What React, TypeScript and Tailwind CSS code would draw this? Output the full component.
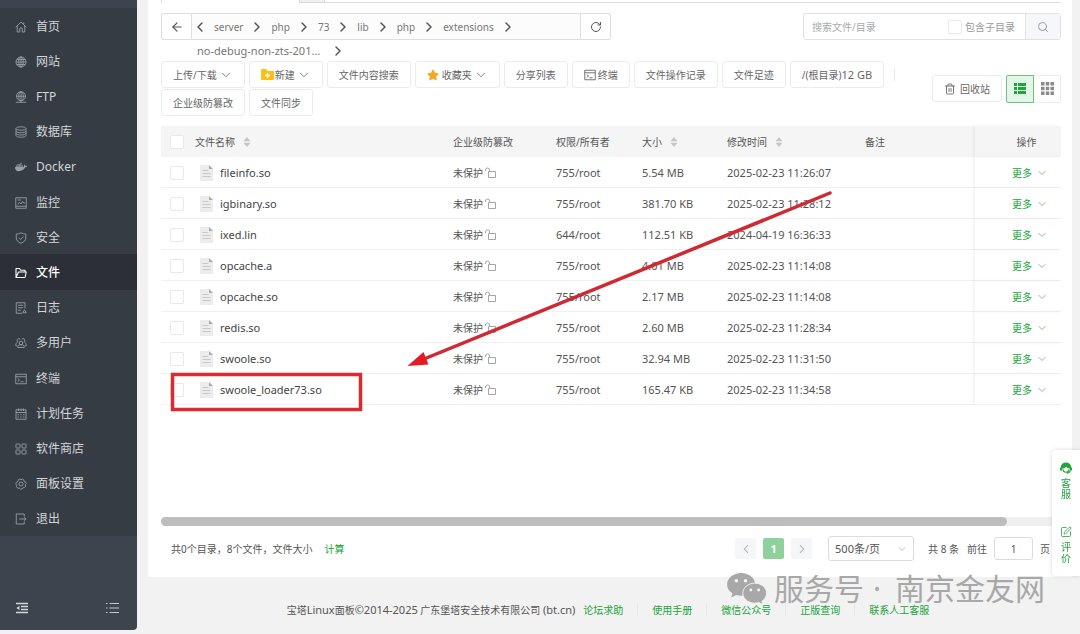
import React from "react";
import {
  ArrowLeft,
  ChevronDown,
  ChevronLeft,
  ChevronRight,
  RotateCw,
  Search,
  SquarePen,
  Trash2,
} from "lucide-react";
import { FaDocker, FaStar } from "react-icons/fa";

type IconProps = { className?: string; children: React.ReactNode };

function Glyph({ className = "size-3", children }: IconProps) {
  return (
    <svg
      viewBox="0 0 24 24"
      fill="none"
      stroke="currentColor"
      strokeWidth="1.8"
      strokeLinejoin="round"
      className={className}
      aria-hidden="true"
    >
      {children}
    </svg>
  );
}

const terminalShape = (
  <>
    <rect x="1.5" y="2.5" width="21" height="19" />
    <path d="M1.5 7.5h21M5.5 11.5l3.5 2.5-3.5 3M11 17.5h6" />
  </>
);

const menu: { label: string; icon: React.ReactNode; active?: boolean }[] = [
  {
    label: "首页",
    icon: (
      <Glyph>
        <path d="M1.5 12.5 12 2l10.5 10.5M4.5 10v12h5v-6a2.5 2.5 0 0 1 5 0v6h5V10M17.5 7V3" />
      </Glyph>
    ),
  },
  {
    label: "网站",
    icon: (
      <Glyph>
        <circle cx="12" cy="12" r="10" />
        <ellipse cx="12" cy="12" rx="4.5" ry="10" />
        <path d="M12 2v20M2 12h20M3.5 7h17M3.5 17h17" />
      </Glyph>
    ),
  },
  {
    label: "FTP",
    icon: (
      <Glyph>
        <circle cx="12" cy="10.5" r="9" />
        <ellipse cx="12" cy="10.5" rx="4.5" ry="9" />
        <path d="M12 1.5v21M3 10.5h18M1.5 22.5h21" />
      </Glyph>
    ),
  },
  {
    label: "数据库",
    icon: (
      <Glyph>
        <ellipse cx="12" cy="5" rx="10" ry="3.5" />
        <path d="M2 5v14c0 2 4.5 3.5 10 3.5S22 21 22 19V5M2 10c0 2 4.5 3.5 10 3.5S22 12 22 10M2 14.5C2 16.5 6.5 18 12 18s10-1.5 10-3.5" />
      </Glyph>
    ),
  },
  { label: "Docker", icon: <FaDocker className="size-3" aria-hidden="true" /> },
  {
    label: "监控",
    icon: (
      <Glyph>
        <rect x="1.5" y="1.5" width="21" height="21" />
        <path d="M1.5 18.5h21M5 6h7M5 14l4-3 3 3 3-5 2 3h3" />
      </Glyph>
    ),
  },
  {
    label: "安全",
    icon: (
      <Glyph>
        <path d="M12 1.5c3 2 6.5 2.5 9.5 2.5v8c0 5-4 8.5-9.5 10.5C6.5 20.5 2.5 17 2.5 12V4C5.5 4 9 3.5 12 1.5ZM7.5 11.5l3.5 3.5 6-6" />
      </Glyph>
    ),
  },
  {
    label: "文件",
    active: true,
    icon: (
      <Glyph>
        <path d="M2 21V3h7l2.5 3.5H20V10M2 21h18l2.5-11H7L2 21Z" strokeWidth="2.2" />
      </Glyph>
    ),
  },
  {
    label: "日志",
    icon: (
      <Glyph>
        <path d="M20 13V1.5H2.5v21H14M6 6.5h10.5M6 11.5h10.5M6 16.5h6" />
        <path d="m19 15.5 3.5 6h-7l3.5-6Z" />
      </Glyph>
    ),
  },
  {
    label: "多用户",
    icon: (
      <Glyph>
        <circle cx="12" cy="12" r="3.5" />
        <path d="M5.5 21v-2c0-2 3-3.5 6.5-3.5s6.5 1.5 6.5 3.5v2h-13ZM6.5 10a3.5 3.5 0 1 1 4-5.5M17.5 10a3.5 3.5 0 1 0-4-5.5M5 10.5c-2.5 1-3.5 3-3.5 7h3M19 10.5c2.5 1 3.5 3 3.5 7h-3" />
      </Glyph>
    ),
  },
  { label: "终端", icon: <Glyph>{terminalShape}</Glyph> },
  {
    label: "计划任务",
    icon: (
      <Glyph>
        <rect x="2" y="3.5" width="20" height="19" />
        <path d="M2 9h20M7 1v5M12 1v5M17 1v5M5 13.5h3M10.5 13.5h3M16 13.5h3M5 18h3M10.5 18h3M16 18h3" />
      </Glyph>
    ),
  },
  {
    label: "软件商店",
    icon: (
      <Glyph>
        <rect x="2" y="2" width="8" height="8" rx="1" />
        <rect x="14" y="2" width="8" height="8" rx="1" />
        <rect x="2" y="14" width="8" height="8" rx="1" />
        <rect x="14" y="14" width="8" height="8" rx="1" />
      </Glyph>
    ),
  },
  {
    label: "面板设置",
    icon: (
      <Glyph>
        <path d="M9.5 2 12 3.5 14.5 2l3 1.5.5 3 3 1.5 1.5 3-2 2.5 1 3-2.5 2.5-3 .5-2 2.5h-3l-2.5-2-3 .5-2.5-3 .5-3L1.5 12 3 8.5 6 7l.5-3.5Z" />
        <circle cx="12" cy="12" r="4" />
      </Glyph>
    ),
  },
  {
    label: "退出",
    icon: (
      <Glyph>
        <path d="M18.5 7V2h-16v20h16v-5M8.5 12H22M18.5 8.5 22 12l-3.5 3.5" />
      </Glyph>
    ),
  },
];

const files = [
  ["fileinfo.so", "755/root", "5.54 MB", "2025-02-23 11:26:07"],
  ["igbinary.so", "755/root", "381.70 KB", "2025-02-23 11:28:12"],
  ["ixed.lin", "644/root", "112.51 KB", "2024-04-19 16:36:33"],
  ["opcache.a", "755/root", "4.01 MB", "2025-02-23 11:14:08"],
  ["opcache.so", "755/root", "2.17 MB", "2025-02-23 11:14:08"],
  ["redis.so", "755/root", "2.60 MB", "2025-02-23 11:28:34"],
  ["swoole.so", "755/root", "32.94 MB", "2025-02-23 11:31:50"],
  ["swoole_loader73.so", "755/root", "165.47 KB", "2025-02-23 11:34:58"],
];

const crumbs = ["server", "php", "73", "lib", "php", "extensions"];

function Check({ label }: { label: string }) {
  return (
    <input
      type="checkbox"
      aria-label={label}
      className="block size-[14px] shrink-0 appearance-none rounded-xs border border-[#e9e9e9] bg-white checked:bg-[#20a53a]"
    />
  );
}

function Sorter() {
  return (
    <svg viewBox="0 0 8 12" className="h-3 w-2 text-[#c4c6ca]" fill="currentColor" aria-hidden="true">
      <path d="M4 1 7.5 5.2h-7zM4 11 .5 6.8h7z" />
    </svg>
  );
}

function ToolButton({ children }: { children: React.ReactNode }) {
  return (
    <button
      type="button"
      className="flex h-[27px] items-center rounded-[3px] border border-[#ebebeb] bg-white px-[11px] whitespace-nowrap"
    >
      {children}
    </button>
  );
}

function Down() {
  return <ChevronDown className="ml-[2px] size-[14px] text-[#777]" strokeWidth={1.6} aria-hidden="true" />;
}

function CrumbArrow() {
  return <ChevronRight className="size-4 text-[#555]" strokeWidth={2.2} aria-hidden="true" />;
}

function FileIcon() {
  return (
    <svg viewBox="0 0 13 16" className="h-4 w-[13px] shrink-0" aria-hidden="true">
      <path d="M0 0h9l4 4v12H0z" fill="#ececec" />
      <path d="M9 0l4 4H9z" fill="#a9a9a9" />
      <path d="M2.5 5.5h6M2.5 8.5h8M2.5 11.5h8" stroke="#c8c8c8" />
    </svg>
  );
}

function Unlock() {
  return (
    <svg viewBox="0 0 11 11" className="size-[11px]" fill="none" stroke="#a5a5a5" aria-hidden="true">
      <path d="M3.5 10.5v-6h7v6zM4.5 4.5V3a2 2 0 0 0-4 0v1" />
    </svg>
  );
}

function Sidebar() {
  return (
    <aside className="mb-1 flex w-[137px] shrink-0 flex-col overflow-hidden rounded-br bg-[#3d444e] pt-2 text-xs text-[#d3d6d9]">
      <nav className="flex flex-1 flex-col bg-[#353c43]">
        {menu.map((item) => (
          <a
            key={item.label}
            href="#"
            className={
              item.active
                ? "flex flex-1 items-center gap-[9px] bg-[#2c2e38] pt-[2px] pl-[15px] font-medium text-white"
                : "flex flex-1 items-center gap-[9px] pt-[2px] pl-[15px]"
            }
          >
            <span className={item.active ? "text-white" : "text-[#9a9fa4]"}>{item.icon}</span>
            {item.label}
          </a>
        ))}
      </nav>
      <div className="flex h-[94px] items-end justify-between px-4 pb-4">
        <button type="button" aria-label="收起菜单">
          <svg viewBox="0 0 12 12" className="size-3" fill="none" stroke="#d3d6d9" strokeWidth="1.3" aria-hidden="true">
            <path d="M0 1.5h12M5 4.5h7M5 7.5h7M0 10.5h12" />
            <path d="M3.5 3.8v4.4L.5 6z" fill="#d3d6d9" stroke="none" />
          </svg>
        </button>
        <button type="button" aria-label="菜单列表" className="mr-[2px]">
          <svg viewBox="0 0 13 12" className="h-3 w-[13px]" fill="none" stroke="#c5c9cd" strokeWidth="1.2" aria-hidden="true">
            <path d="M0 1.5h1.5M3.5 1.5H13M0 6h1.5M3.5 6H13M0 10.5h1.5M3.5 10.5H13" />
          </svg>
        </button>
      </div>
    </aside>
  );
}

function PathBar() {
  return (
    <div className="flex items-start justify-between">
      <div className="flex w-[450px] text-[#777]">
        <button
          type="button"
          aria-label="返回上一级"
          className="flex h-[27px] w-[31px] items-center justify-center rounded-l-xs border border-[#dedede]"
        >
          <ArrowLeft className="size-[14px] text-[#555]" aria-hidden="true" />
        </button>
        <nav className="h-12 flex-1" aria-label="路径">
          <div className="flex h-[27px] items-center gap-[6px] border-y border-[#dedede] bg-[#fcfcfc]">
            <ChevronLeft className="size-4 text-[#555]" strokeWidth={2.2} aria-hidden="true" />
            {crumbs.map((name, i) => (
              <React.Fragment key={i}>
                <a href="#">{name}</a>
                <CrumbArrow />
              </React.Fragment>
            ))}
          </div>
          <div className="flex items-center gap-[10px] pt-[3px] pl-[5px] text-[11px] leading-4">
            <a href="#">no-debug-non-zts-201...</a>
            <CrumbArrow />
          </div>
        </nav>
        <button
          type="button"
          aria-label="刷新"
          className="flex h-[27px] w-[31px] items-center justify-center rounded-r-xs border border-[#dedede]"
        >
          <RotateCw className="size-3 text-[#555]" aria-hidden="true" />
        </button>
      </div>
      <form className="flex h-[27px] w-[258px] rounded-[3px] border border-[#e2e2e5]" onSubmit={(e) => e.preventDefault()}>
        <input
          type="text"
          aria-label="搜索文件/目录"
          placeholder="搜索文件/目录"
          className="min-w-0 flex-1 pl-2 outline-none placeholder:text-[#aaa]"
        />
        <label className="flex items-center gap-[3px] pr-[10px] text-[#999]">
          <Check label="包含子目录" />
          包含子目录
        </label>
        <button
          type="submit"
          aria-label="搜索"
          className="flex w-[35px] items-center justify-center border-l border-[#e2e2e5] bg-[#f5f7fa]"
        >
          <Search className="size-3 text-[#8d9199]" strokeWidth={1.8} aria-hidden="true" />
        </button>
      </form>
    </div>
  );
}

function Toolbar() {
  return (
    <div className="flex items-center justify-between text-[#666]">
      <div className="flex flex-1 flex-wrap items-center gap-x-1 gap-y-px">
        <ToolButton>
          上传/下载
          <Down />
        </ToolButton>
        <ToolButton>
          <svg viewBox="0 0 13 11" className="mr-px h-[11px] w-[13px]" aria-hidden="true">
            <path d="M0 1a1 1 0 0 1 1-1h4l1.5 2H12a1 1 0 0 1 1 1v7a1 1 0 0 1-1 1H1a1 1 0 0 1-1-1z" fill="#fbbf16" />
            <path d="M6.5 4v5M4 6.5h5" stroke="#fff" strokeWidth="1.3" />
          </svg>
          新建
          <Down />
        </ToolButton>
        <ToolButton>文件内容搜索</ToolButton>
        <ToolButton>
          <FaStar className="mr-[3px] size-3 text-[#f6a623]" aria-hidden="true" />
          收藏夹
          <Down />
        </ToolButton>
        <ToolButton>分享列表</ToolButton>
        <ToolButton>
          <Glyph className="mr-[2px] size-3">{terminalShape}</Glyph>
          终端
        </ToolButton>
        <ToolButton>文件操作记录</ToolButton>
        <ToolButton>文件足迹</ToolButton>
        <ToolButton>
          <span>
            /(根目录)<span className="text-[11px]">12 GB</span>
          </span>
        </ToolButton>
        <span className="mx-[6px] h-3 w-px bg-[#e8e8e8]" />
        <ToolButton>企业级防篡改</ToolButton>
        <ToolButton>文件同步</ToolButton>
      </div>
      <div className="flex items-center">
        <ToolButton>
          <Trash2 className="mr-1 size-3" strokeWidth={1.8} aria-hidden="true" />
          回收站
        </ToolButton>
        <button
          type="button"
          aria-label="列表视图"
          className="ml-1 flex size-7 items-center justify-center rounded-l-xs border border-[#6cc57d] bg-[#e4f6e8]"
        >
          <svg viewBox="0 0 12 11" className="h-[11px] w-3" fill="#20a53a" aria-hidden="true">
            <path d="M0 0h3v3H0zM4 0h8v3H4zM0 4h3v3H0zM4 4h8v3H4zM0 8h3v3H0zM4 8h8v3H4z" />
          </svg>
        </button>
        <button
          type="button"
          aria-label="图标视图"
          className="flex h-7 w-[27px] items-center justify-center rounded-r-xs border border-l-0 border-[#ebebeb]"
        >
          <svg viewBox="0 0 13 13" className="size-[13px]" fill="#8c8c8c" aria-hidden="true">
            <path d="M0 0h3.5v3.5H0zM4.75 0h3.5v3.5h-3.5zM9.5 0H13v3.5H9.5zM0 4.75h3.5v3.5H0zM4.75 4.75h3.5v3.5h-3.5zM9.5 4.75H13v3.5H9.5zM0 9.5h3.5V13H0zM4.75 9.5h3.5V13h-3.5zM9.5 9.5H13V13H9.5z" />
          </svg>
        </button>
      </div>
    </div>
  );
}

function FileTable() {
  return (
    <div className="relative mt-[10px] flex-1">
      <table className="w-full table-fixed border-separate border-spacing-0 text-left text-[#555]">
        <colgroup>
          <col className="w-[31px]" />
          <col className="w-[258px]" />
          <col className="w-[103px]" />
          <col className="w-[86px]" />
          <col className="w-[85px]" />
          <col className="w-[138px]" />
          <col />
          <col className="w-[86px]" />
        </colgroup>
        <thead>
          <tr className="h-[31px] bg-[#f5f5f5] *:px-[3px] *:font-normal">
            <th>
              <div className="pl-[6px]">
                <Check label="全选" />
              </div>
            </th>
            <th>
              <span className="flex items-center gap-2">
                文件名称 <Sorter />
              </span>
            </th>
            <th>企业级防篡改</th>
            <th>权限/所有者</th>
            <th>
              <span className="flex items-center gap-2">
                大小 <Sorter />
              </span>
            </th>
            <th>
              <span className="flex items-center gap-2">
                修改时间 <Sorter />
              </span>
            </th>
            <th>备注</th>
            <th className="shadow-[-2px_0_3px_rgba(0,0,0,0.05)]">
              <span className="block pl-[17px] text-center">操作</span>
            </th>
          </tr>
        </thead>
        <tbody>
          {files.map(([name, owner, size, date]) => (
            <tr key={name} className="h-[31px] text-[11px] *:border-b *:border-[#f0f0f0] *:px-[3px] *:pt-px">
              <td>
                <div className="pl-[6px]">
                  <Check label={name} />
                </div>
              </td>
              <td>
                <a href="#" className="flex items-center gap-[7px] pl-[5px] leading-4 text-[#444]">
                  <FileIcon />
                  {name}
                </a>
              </td>
              <td>
                <a href="#" className="flex items-center gap-[2px] text-[10px]">
                  未保护
                  <Unlock />
                </a>
              </td>
              <td>{owner}</td>
              <td>{size}</td>
              <td>{date}</td>
              <td />
              <td className="shadow-[-2px_0_3px_rgba(0,0,0,0.05)]">
                <button type="button" className="flex w-full items-center justify-center gap-1 pl-6 text-[10px] text-[#20a53a]">
                  更多
                  <ChevronDown className="size-3 text-[#6fb97e]" strokeWidth={1.8} aria-hidden="true" />
                </button>
              </td>
            </tr>
          ))}
        </tbody>
      </table>
      <svg viewBox="0 0 700 290" className="pointer-events-none absolute top-0 left-0 h-[290px] w-[700px]" fill="none" aria-hidden="true">
        <rect x="11.5" y="248.5" width="188" height="35" stroke="#dc2a30" strokeWidth="3.5" />
        <path d="M669 67 263 233" stroke="#cf2a33" strokeWidth="3.5" strokeLinecap="round" />
        <path d="M246.5 240 262.5 226 267.5 238.5z" fill="#e31b23" />
      </svg>
    </div>
  );
}

function Pager() {
  return (
    <div className="flex items-center justify-between pt-[10px] pr-[11px] pb-4 pl-[10px] text-[#555]">
      <p>
        共0个目录，8个文件，文件大小
        <a href="#" className="ml-3 text-[#20a53a]">
          计算
        </a>
      </p>
      <div className="flex items-center">
        <button type="button" aria-label="上一页" className="flex size-[21px] items-center justify-center rounded-xs bg-[#f5f6f8] text-[#aaa]">
          <ChevronLeft className="size-[14px]" strokeWidth={1.8} />
        </button>
        <button type="button" className="ml-[7px] size-[21px] rounded-xs bg-[#8fd19c] text-[11px] font-bold text-white">
          1
        </button>
        <button type="button" aria-label="下一页" className="ml-[7px] flex size-[21px] items-center justify-center rounded-xs bg-[#f5f6f8] text-[#aaa]">
          <ChevronRight className="size-[14px]" strokeWidth={1.8} />
        </button>
        <div className="relative ml-4">
          <select aria-label="每页条数" className="block h-[25px] w-[86px] appearance-none rounded-[3px] border border-[#dcdcdc] bg-white pl-[6px] text-[11px]">
            <option>500条/页</option>
          </select>
          <ChevronDown className="pointer-events-none absolute top-[7px] right-[6px] size-3 text-[#bbb]" strokeWidth={1.8} aria-hidden="true" />
        </div>
        <span className="ml-[14px]">共 8 条</span>
        <label className="ml-2 flex items-center gap-[7px]">
          前往
          <input type="text" defaultValue="1" className="h-[23px] w-[39px] rounded-[3px] border border-[#dcdcdc] text-center" />
          页
        </label>
      </div>
    </div>
  );
}

function SideDock() {
  return (
    <div className="fixed right-0 bottom-[58px] flex w-7 flex-col items-center gap-[26px] rounded-l bg-white pt-3 pb-3 text-[#20a53a] shadow-[0_0_4px_rgba(0,0,0,0.15)]">
      <a href="#" className="flex w-[10px] flex-col items-center gap-1 leading-[11px]">
        <svg viewBox="0 0 14 14" className="size-3" aria-hidden="true">
          <path d="M1 6a6 5.5 0 0 1 12 0l1 1v3h-2.5V7.5C9 7.5 8 6.5 7.5 5.5 6 7 4.5 7.5 2.5 7.5V10H0V7z" fill="#20a53a" />
          <path d="M3.5 8.5a3.5 3.5 0 0 0 7 0M12 10c-.5 2-2 3-4 3" fill="none" stroke="#20a53a" strokeWidth="1.2" />
        </svg>
        <span>客服</span>
      </a>
      <a href="#" className="flex w-[10px] flex-col items-center gap-1 leading-[11px]">
        <SquarePen className="size-3" strokeWidth={1.6} aria-hidden="true" />
        <span>评价</span>
      </a>
    </div>
  );
}

function Watermark() {
  return (
    <div className="pointer-events-none absolute right-[35px] bottom-6 flex items-center gap-[7px] text-[30px] leading-[42px] whitespace-nowrap text-[#a8a8a8]">
      <svg viewBox="0 0 41 33" className="h-8 w-10" aria-hidden="true">
        <path
          d="M14.5 0C6.5 0 0 5.2 0 11.8c0 3.8 2.1 7 5.5 9.2L4.2 25.2l5-2.5c1.7.5 3.5.8 5.3.8C22.5 23.5 29 18.2 29 11.8S22.5 0 14.5 0Z"
          fill="#a8a8a8"
        />
        <path
          d="M28.5 10.5c-6.8 0-12.3 4.6-12.3 10.3s5.5 10.3 12.3 10.3c1.5 0 3-.2 4.3-.6l4.2 2.3-1.1-3.7c3-1.9 4.8-4.9 4.8-8.3 0-5.7-5.5-10.3-12.2-10.3Z"
          fill="#a8a8a8"
          stroke="#f2f2f2"
        />
        <g fill="#f5f5f5">
          <circle cx="9.5" cy="8" r="1.8" />
          <circle cx="19" cy="8" r="1.8" />
          <circle cx="24.5" cy="17.5" r="1.5" />
          <circle cx="32.5" cy="17.5" r="1.5" />
        </g>
      </svg>
      <span>
        服务号<span className="pr-[14px] pl-[9px]">·</span>南京金友网
      </span>
    </div>
  );
}

const footerLinks = ["论坛求助", "使用手册", "微信公众号", "正版查询", "联系人工客服"];

export default function App() {
  return (
    <div className="flex min-h-screen bg-[#f2f2f2] font-['Noto_Sans','Noto_Sans_CJK_SC',sans-serif] text-[10px] leading-4">
      <Sidebar />
      <div className="relative flex min-w-0 flex-1 flex-col pr-2 pl-[11px]">
        <main className="flex flex-1 flex-col bg-white pr-[11px] pl-[13px]">
          <div className="flex h-[3px]">
            <span className="w-[138px] border-l border-[#dcdcdc]" />
            <span className="w-[26px] border-x border-b border-[#d8d8d8] bg-[#f0f0f0]" />
            <span className="flex-1 border-b border-[#dedede]" />
          </div>
          <div className="pt-[10px]">
            <PathBar />
          </div>
          <Toolbar />
          <FileTable />
          <div className="h-[9px] rounded-full bg-[#efefef]">
            <div className="h-full w-[94%] rounded-full bg-[#bdbdbd]" />
          </div>
          <Pager />
        </main>
        <footer className="flex h-[57px] items-center justify-center pt-2 pr-1 text-[#555]">
          <span className="mr-2">
            宝塔<span className="text-[11px]">Linux</span>面板<span className="text-[11px]">©2014-2025</span>{" "}
            广东堡塔安全技术有限公司 <span className="text-[11px]">(bt.cn)</span>
          </span>
          {footerLinks.map((label, i) => (
            <React.Fragment key={label}>
              {i > 0 && <span className="mx-[14px] h-3 w-px bg-[#e6e6e6]" />}
              <a href="#" className="text-[#20a53a]">
                {label}
              </a>
            </React.Fragment>
          ))}
        </footer>
        <Watermark />
      </div>
      <SideDock />
    </div>
  );
}
